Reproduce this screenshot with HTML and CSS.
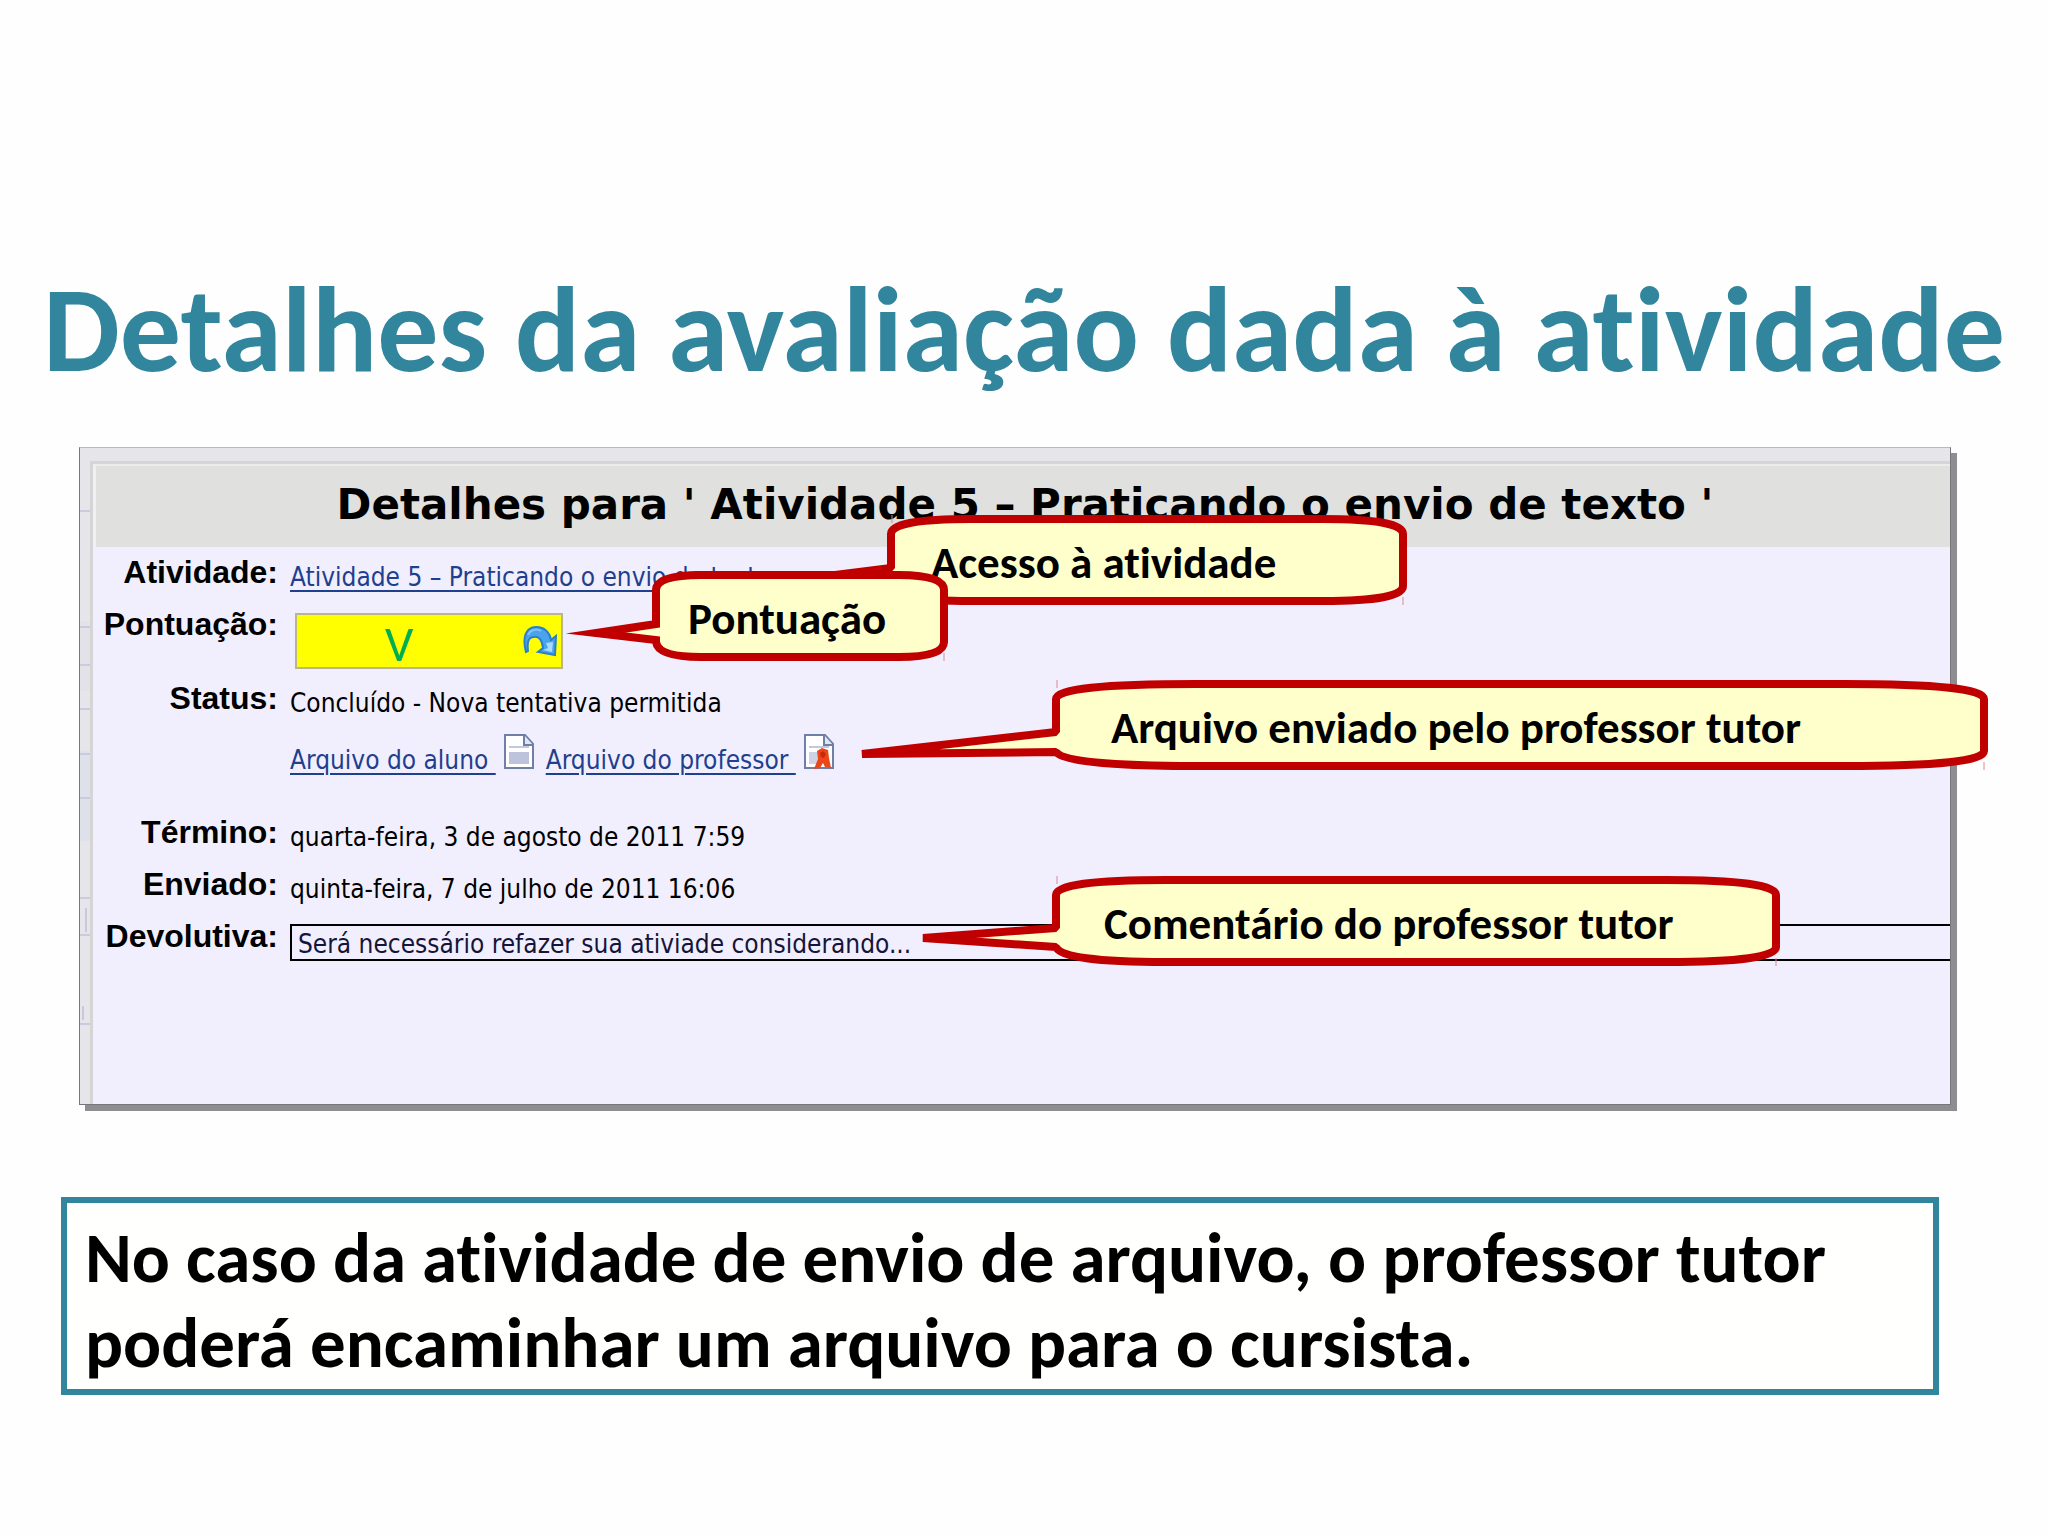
FILE: index.html
```
<!DOCTYPE html>
<html lang="pt-BR">
<head>
  <meta charset="UTF-8">
  <meta name="viewport" content="width=device-width, initial-scale=1.0">
  <title>Detalhes da avaliação dada à atividade</title>
  <link rel="stylesheet" href="styles.css">
</head>
<body>
  <main class="slide">
    <h1>Detalhes da avaliação dada à atividade</h1>

    <section class="panel">
      <svg class="gutter" width="10" height="643" aria-hidden="true">
        <rect y="160" width="10" height="70" fill="#e3e2e8"/>
        <rect y="290" width="10" height="90" fill="#dee0ea"/>
        <path d="M0 50h10M0 166h10M0 204h10M0 248h10M0 293h10M0 337h10M0 437h10M0 474h10M0 563h10" stroke="#cccbdd" stroke-width="2"/>
        <path d="M6 447v24M3 545v14" stroke="#c9c8dc" stroke-width="2"/>
      </svg>
      <div class="details">
        <h2>Detalhes para ' Atividade 5 – Praticando o envio de texto '</h2>
        <div class="rows">
          <div class="row">
            <span class="label">Atividade:</span>
            <div class="value"><a href="#">Atividade 5 – Praticando o envio de texto</a></div>
          </div>
          <div class="row score-row">
            <span class="label">Pontuação:</span>
            <div class="score">
              <span>V</span>
              <svg class="redo" width="36" height="32" viewBox="0 0 36 32" aria-hidden="true">
                <path d="M3 27C-1 12 3 2 13 2c9 0 14 6 15 13l5-4-1 19-17-3 5-4c-1-8-4-12-9-11-6 0-7 6-6 14z" fill="#4aa3ee" stroke="#2b7fc4" stroke-width="2"/>
                <path d="M23 18l7-1-1 10-9-2 5-2z" fill="#a5dcff"/>
                <path d="M5 10c2-5 8-7 13-4" fill="none" stroke="#7cc4fa" stroke-width="2"/>
              </svg>
            </div>
          </div>
          <div class="row status-row">
            <span class="label">Status:</span>
            <div class="value">Concluído - Nova tentativa permitida</div>
          </div>
          <div class="row files-row">
            <span class="label"></span>
            <div class="value files">
              <a href="#">Arquivo do aluno&nbsp;</a>
              <svg class="doc" width="30" height="35" viewBox="0 0 30 35" aria-hidden="true">
                <path d="M1 1h20l8 9v24H1z" fill="#fff" stroke="#6f7fa5" stroke-width="2"/>
                <path d="M20 1v10h9" fill="#dfe5f3" stroke="#6f7fa5" stroke-width="2"/>
                <path d="M5 13h20" stroke="#c3c9dc" stroke-width="2"/>
                <rect x="5" y="18" width="20" height="12" fill="#bcc3db"/>
              </svg>
              <a href="#">Arquivo do professor&nbsp;</a>
              <svg class="doc" width="30" height="35" viewBox="0 0 30 35" aria-hidden="true">
                <path d="M1 1h20l8 9v24H1z" fill="#fff" stroke="#6f7fa5" stroke-width="2"/>
                <path d="M20 1v10h9" fill="#dfe5f3" stroke="#6f7fa5" stroke-width="2"/>
                <path d="M5 13h20" stroke="#c3c9dc" stroke-width="2"/>
                <rect x="5" y="18" width="10" height="12" fill="#cdd2e4"/>
                <path d="M13 17l5-3 6 2 1 8 2 10-6-1-2-4-3 5-6 1 4-10z" fill="#ee4518"/>
                <path d="M16 19l3-2 3 3-2 4-3-1z" fill="#c62a0c"/>
              </svg>
            </div>
          </div>
          <div class="row">
            <span class="label">Término:</span>
            <div class="value">quarta-feira, 3 de agosto de 2011 7:59</div>
          </div>
          <div class="row">
            <span class="label">Enviado:</span>
            <div class="value">quinta-feira, 7 de julho de 2011 16:06</div>
          </div>
          <div class="row">
            <label class="label" for="feedback">Devolutiva:</label>
            <input class="feedback" id="feedback" type="text" value="Será necessário refazer sua ativiade considerando..." readonly>
          </div>
        </div>
      </div>

      <div class="callout callout-access">
        <svg width="520" height="90" aria-hidden="true">
          <path d="M4 19Q4 4 84 4H436Q516 4 516 19V71Q516 86 436 86H84Q4 86 4 71V66L-76 63 4 53Z"/>
          <path class="tick" d="M5 0v8M516 82v8"/>
        </svg>
        <span>Acesso à atividade</span>
      </div>
      <div class="callout callout-score">
        <svg width="296" height="90" aria-hidden="true">
          <path d="M4 19Q4 4 49 4H247Q292 4 292 19V71Q292 86 247 86H49Q6 86 4 71V69L-56 62 4 53Z"/>
          <path class="tick" d="M292 82v8"/>
        </svg>
        <span>Pontuação</span>
      </div>
      <div class="callout callout-file">
        <svg width="936" height="90" aria-hidden="true">
          <path d="M4 19Q4 4 144 4H792Q932 4 932 19V71Q932 86 792 86H144Q14 86 4 72L-190 74 4 52Z"/>
          <path class="tick" d="M5 0v8M932 82v8"/>
        </svg>
        <span>Arquivo enviado pelo professor tutor</span>
      </div>
      <div class="callout callout-comment">
        <svg width="728" height="90" aria-hidden="true">
          <path d="M4 19Q4 4 114 4H614Q724 4 724 19V71Q724 86 614 86H114Q10 86 4 71L-129 62 4 52Z"/>
          <path class="tick" d="M5 0v8M724 82v8"/>
        </svg>
        <span>Comentário do professor tutor</span>
      </div>
    </section>

    <p class="note">No caso da atividade de envio de arquivo, o professor tutor poderá encaminhar um arquivo para o cursista.</p>
  </main>
</body>
</html>
```
FILE: styles.css
```
body {
  margin: 0;
  background-color: #fefefe;
  color: #000;
  font-family: Calibri, Carlito, Lato, sans-serif;
  font-variant-ligatures: none;
}

.slide {
  padding-top: 260px;
}

h1 {
  margin: 0;
  color: #31859c;
  font-size: 122px;
  line-height: 140px;
  font-weight: bold;
  text-align: center;
  white-space: nowrap;
}

.panel {
  position: relative;
  display: flex;
  margin: 47px 97px 0 79px;
  padding-top: 13px;
  min-height: 643px;
  border: 1px solid #77777b;
  border-top-color: #b9b8bd;
  background-color: #e6e5e9;
  box-shadow: 6px 6px 0 #8e8e92;
}

.gutter {
  flex: none;
}

.details {
  flex: 1;
  border-left: 3px solid #d5d5d6;
  border-top: 3px solid #d5d4d7;
  background-color: #f1effe;
}

h2 {
  margin: 0;
  padding: 0 0 4px 4px;
  border-left: 3px solid #f0eff2;
  border-top: 2px solid #ececee;
  background-color: #e0e0df;
  font-family: "DejaVu Sans", Verdana, sans-serif;
  font-size: 42px;
  line-height: 77px;
  font-weight: bold;
  text-align: center;
  white-space: nowrap;
}

.rows {
  padding-top: 5px;
}

.row {
  display: flex;
  gap: 12px;
  min-height: 52px;
}

.label {
  flex: none;
  width: 185px;
  font-family: "Liberation Sans", Arial, sans-serif;
  font-size: 32px;
  line-height: 40px;
  font-weight: bold;
  text-align: right;
}

.value,
.feedback {
  font-family: "DejaVu Sans Condensed", Tahoma, sans-serif;
  font-size: 26px;
  line-height: 44px;
}

.value {
  padding-top: 3px;
}

.value a {
  color: #1f3f8f;
  text-decoration-thickness: 2px;
  text-underline-offset: 4px;
}

.score-row {
  min-height: 74px;
}

.score {
  display: flex;
  align-items: center;
  justify-content: space-between;
  box-sizing: border-box;
  width: 268px;
  height: 56px;
  margin: 9px 0 0 5px;
  padding: 6px 2px 0 88px;
  border: 2px solid #b9b58c;
  background-color: #ff0;
  color: #00b050;
  font-size: 50px;
  line-height: 50px;
}

.redo {
  margin-bottom: 6px;
}

.status-row {
  min-height: 56px;
}

.files-row {
  min-height: 78px;
}

/* page icons sit a little above the link text */
.files {
  display: flex;
  padding-top: 0;
}

.files a {
  padding-top: 4px;
}

.doc {
  flex: none;
  margin: 0 12px 0 8px;
}

.feedback {
  flex: 1;
  min-width: 0;
  box-sizing: border-box;
  height: 37px;
  margin: 8px 0 0;
  padding: 2px 6px 0;
  border: 2px solid #000;
  border-right: 0;
  background-color: transparent;
  color: #15153a;
  line-height: 32px;
}

.callout {
  position: absolute;
  height: 90px;
  font-size: 45px;
  line-height: 96px;
  font-weight: bold;
  white-space: nowrap;
}

.callout svg {
  position: absolute;
  top: 0;
  left: 0;
  overflow: visible;
  fill: #ffffcc;
  stroke: #c00000;
  stroke-width: 8px;
  stroke-linejoin: bevel;
}

.callout-score svg {
  stroke-linejoin: miter;
  stroke-miterlimit: 20;
}

.callout .tick {
  stroke: #d98a94;
  stroke-width: 1px;
}

.callout span {
  position: relative;
}

.callout-access {
  top: 67px;
  left: 807px;
  padding-left: 44px;
}

.callout-score {
  top: 123px;
  left: 572px;
  padding-left: 36px;
}

.callout-file {
  top: 232px;
  left: 972px;
  padding-left: 59px;
}

.callout-comment {
  top: 428px;
  left: 972px;
  padding-left: 52px;
}

.note {
  margin: 92px 109px 0 61px;
  padding: 12px 18px 4px;
  border: 6px solid #31859c;
  background-color: #fffffd;
  font-size: 71px;
  line-height: 85px;
  font-weight: bold;
}
```
